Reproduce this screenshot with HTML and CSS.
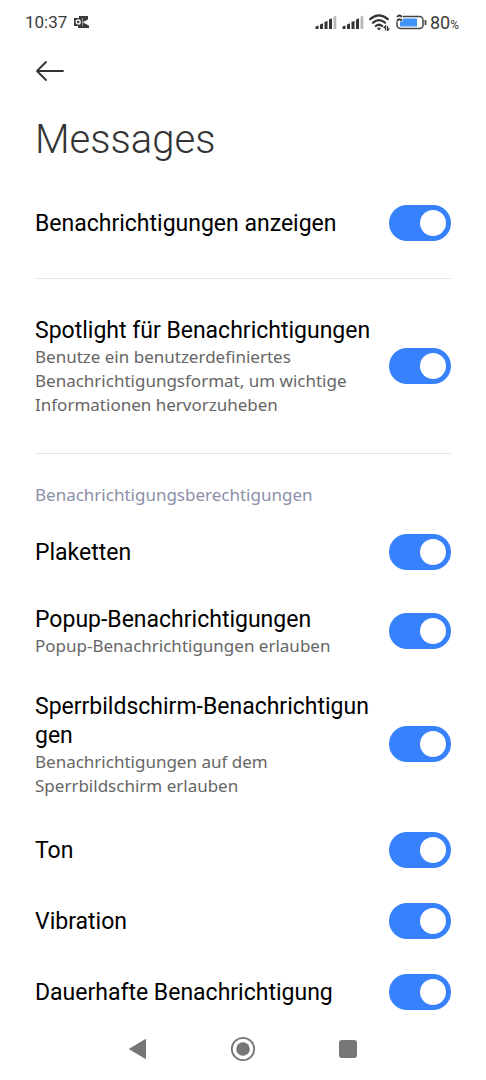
FILE: index.html
```html
<!DOCTYPE html>
<html lang="de">
<head>
<meta charset="utf-8">
<meta name="viewport" content="width=device-width, initial-scale=1">
<title>Messages</title>
<link rel="stylesheet" href="styles.css">
</head>
<body>
<div class="screen">
  <div class="status">
    <span class="clock">10:37</span>
    <svg class="mail" width="16" height="14" viewBox="0 0 16 14" aria-hidden="true">
      <path d="M5 1h9v4.500L9.500 7.500 15 10v3H4v-2h5V3H5z" fill="#3c3c3c"/>
      <rect x="0" y="3" width="8.500" height="8" fill="#3c3c3c"/>
      <circle cx="4.200" cy="7" r="2" fill="none" stroke="#fff" stroke-width="1.300"/>
      <path d="M15 4.500L10 7.200l6 3.300" fill="none" stroke="#fff" stroke-width="1.200"/>
    </svg>
    <span class="spacer"></span>
    <svg class="signal" width="22" height="15" viewBox="0 0 22 15" aria-hidden="true">
      <path d="M.500 14v-2.500l3-1V14zM5 14V9.500l3-1.200V14zM9.500 14V7l3-1.300V14zM14 14V4.500l3-1.300V14z" fill="#333"/>
      <path d="M18.500 14V1.800l2.800-1.300V14z" fill="#b8b8b8"/>
    </svg>
    <svg class="signal" width="22" height="15" viewBox="0 0 22 15" aria-hidden="true">
      <path d="M.500 14v-2.500l3-1V14zM5 14V9.500l3-1.200V14zM9.500 14V7l3-1.300V14zM14 14V4.500l3-1.300V14z" fill="#333"/>
      <path d="M18.500 14V1.800l2.800-1.300V14z" fill="#b8b8b8"/>
    </svg>
    <svg class="wifi" width="21" height="17" viewBox="0 0 21 17" aria-hidden="true">
      <path d="M1.200 5.200Q10-2.500 18.800 5.200M4 8.700q6-5 12 0M6.800 12q3.200-2.500 6.400 0" fill="none" stroke="#333" stroke-width="2.200" stroke-linecap="round"/>
      <path d="M8 14.200q2-1.200 4 0L10 16.500z" fill="#333"/>
      <path d="M16.500 16.500v-4.500l-1.800 2M18.500 12v4.500l1.800-2" fill="none" stroke="#333" stroke-width="1.200"/>
    </svg>
    <svg class="battery" width="31" height="17" viewBox="0 0 31 17" aria-hidden="true">
      <rect x="1" y="2.500" width="26" height="12" rx="3.500" fill="#fff" stroke="#444" stroke-width="1.500"/>
      <rect x="4" y="4.500" width="17" height="8" fill="#3d94f6"/>
      <path d="M29.500 6v5" stroke="#444" stroke-width="1.800"/>
      <path d="M0 0h7v7.500H0z" fill="#fff"/>
      <path d="M1 3q2.500-3 5 0M1 6.800q2.500-3 5 0" fill="none" stroke="#333" stroke-width="1.900"/>
    </svg>
    <span class="charge">80<small class="percent">%</small></span>
  </div>

  <header class="header">
    <button class="back" type="button" aria-label="Zurück">
      <svg width="30" height="22" viewBox="0 0 30 22" aria-hidden="true"><path d="M28 11H2M11 2L2 11l9 9" fill="none" stroke="#333" stroke-width="1.800" stroke-linecap="round" stroke-linejoin="round"/></svg>
    </button>
    <h1 class="title">Messages</h1>
  </header>

  <main class="settings">
    <section class="group">
      <label class="row"><span class="text"><span class="name">Benachrichtigungen anzeigen</span></span><input class="toggle" type="checkbox" role="switch" checked></label>
    </section>
    <section class="group">
      <label class="row"><span class="text"><span class="name">Spotlight für Benachrichtigungen</span><span class="hint">Benutze ein benutzerdefiniertes<br>Benachrichtigungsformat, um wichtige<br>Informationen hervorzuheben</span></span><input class="toggle" type="checkbox" role="switch" checked></label>
    </section>
    <section class="permissions">
      <h2 class="caption">Benachrichtigungsberechtigungen</h2>
      <label class="row"><span class="text"><span class="name">Plaketten</span></span><input class="toggle" type="checkbox" role="switch" checked></label>
      <label class="row"><span class="text"><span class="name">Popup-Benachrichtigungen</span><span class="hint">Popup-Benachrichtigungen erlauben</span></span><input class="toggle" type="checkbox" role="switch" checked></label>
      <label class="row"><span class="text"><span class="name">Sperrbildschirm-Benachrichtigun<br>gen</span><span class="hint">Benachrichtigungen auf dem<br>Sperrbildschirm erlauben</span></span><input class="toggle" type="checkbox" role="switch" checked></label>
      <label class="row"><span class="text"><span class="name">Ton</span></span><input class="toggle" type="checkbox" role="switch" checked></label>
      <label class="row"><span class="text"><span class="name">Vibration</span></span><input class="toggle" type="checkbox" role="switch" checked></label>
      <label class="row"><span class="text"><span class="name">Dauerhafte Benachrichtigung</span></span><input class="toggle" type="checkbox" role="switch" checked></label>
    </section>
  </main>

  <nav class="navbar">
    <button class="key" type="button" aria-label="Zurück"><svg width="26" height="26" viewBox="0 0 26 26" aria-hidden="true"><path d="M4.500 13L20.500 3.500v19z" fill="#777" stroke="#777" stroke-linejoin="round"/></svg></button>
    <button class="key" type="button" aria-label="Startbildschirm"><svg width="26" height="26" viewBox="0 0 26 26" aria-hidden="true"><circle cx="13" cy="13" r="11.200" fill="none" stroke="#777" stroke-width="1.800"/><circle cx="13" cy="13" r="6.800" fill="#777"/></svg></button>
    <button class="key" type="button" aria-label="Letzte Apps"><svg width="26" height="26" viewBox="0 0 26 26" aria-hidden="true"><rect x="4" y="4" width="18" height="18" rx="3" fill="#777"/></svg></button>
  </nav>
</div>
</body>
</html>
```
FILE: styles.css
```css
* {
  box-sizing: border-box;
}

body {
  margin: 0;
  background: #fff;
  color: #000;
  font-family: Roboto, sans-serif;
}

.screen {
  display: flex;
  flex-direction: column;
  min-height: 100vh;
}

.status {
  display: flex;
  align-items: center;
  height: 44px;
  padding: 0 27px 0 25px;
  color: #3c3c3c;
  font-size: 17px;
}

.mail {
  margin-left: 7px;
}

.spacer {
  flex: 1;
}

.signal {
  margin-right: 5px;
}

.wifi {
  margin-right: 6px;
}

.battery {
  margin-right: 3px;
}

.charge {
  font-size: 18px;
}

.percent {
  font-size: 12px;
}

.header {
  padding: 12px 35px 0;
}

.back {
  display: flex;
  align-items: center;
  height: 30px;
  padding: 0;
  border: 0;
  background: none;
}

.title {
  margin: 26px 0 0;
  color: #333;
  font-size: 40px;
  font-weight: 300;
  line-height: 56px;
}

.settings {
  padding: 19px 35px 0;
}

.group {
  margin-bottom: 19px;
  padding-bottom: 20px;
  border-bottom: 1px solid #e4e4e4;
}

.row {
  display: flex;
  align-items: center;
  min-height: 71px;
  padding: 16px 0;
}

.text {
  flex: 1;
  min-width: 0;
  padding-top: 2px;
  white-space: nowrap;
}

.name,
.hint {
  display: block;
}

.name {
  font-size: 23px;
  line-height: 29px;
}

.hint {
  color: #666;
  font-family: "Noto Sans", sans-serif;
  font-size: 17px;
  line-height: 24px;
}

.toggle {
  display: flex;
  align-items: center;
  justify-content: flex-end;
  flex: none;
  width: 62px;
  height: 36px;
  margin: 0;
  padding: 5px;
  border-radius: 18px;
  background: #c8c8c8;
  appearance: none;
}

.toggle:checked {
  background: #3781fc;
}

.toggle::before {
  width: 26px;
  height: 26px;
  border-radius: 50%;
  background: #fff;
  content: "";
}

.toggle:not(:checked) {
  justify-content: flex-start;
}

.caption {
  margin: 0;
  color: #8c8fa8;
  font-family: "Noto Sans", sans-serif;
  font-size: 17px;
  font-weight: 400;
  line-height: 43px;
}

.navbar {
  display: flex;
  justify-content: center;
  gap: 79px;
  margin-top: auto;
  padding-bottom: 18px;
}

.key {
  display: flex;
  padding: 0;
  border: 0;
  background: none;
}
```
